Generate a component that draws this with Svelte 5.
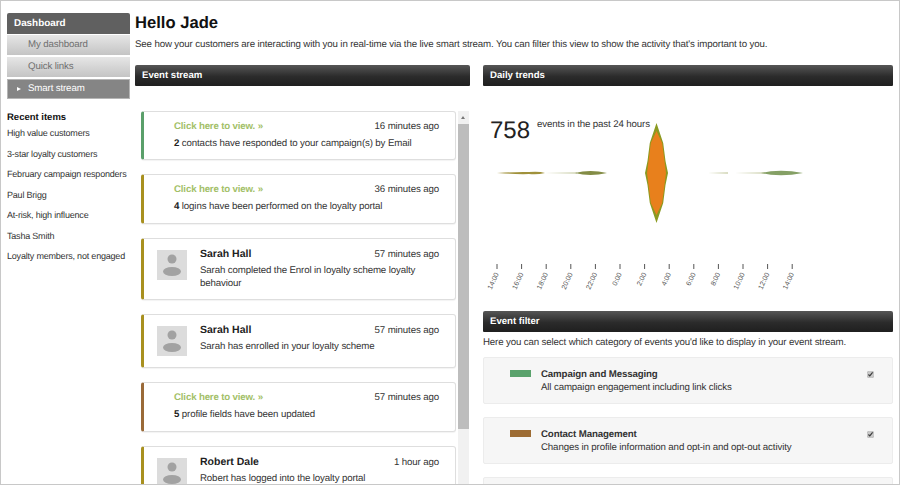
<script>
  const recent = ['High value customers','3-star loyalty customers','February campaign responders','Paul Brigg','At-risk, high influence','Tasha Smith','Loyalty members, not engaged'];
  const events = [
    { c:'#5a9f6a', h:49, time:'16 minutes ago', n:'2', text:' contacts have responded to your campaign(s) by Email' },
    { c:'#a8901f', h:50, time:'36 minutes ago', n:'4', text:' logins have been performed on the loyalty portal' },
    { c:'#a8901f', h:62, time:'57 minutes ago', name:'Sarah Hall', text:'Sarah completed the Enrol in loyalty scheme loyalty behaviour' },
    { c:'#a8901f', h:54, time:'57 minutes ago', name:'Sarah Hall', text:'Sarah has enrolled in your loyalty scheme' },
    { c:'#9a6a38', h:50, time:'57 minutes ago', n:'5', text:' profile fields have been updated' },
    { c:'#a8901f', h:63, time:'1 hour ago', name:'Robert Dale', text:'Robert has logged into the loyalty portal' }
  ];
  const hours = ['14:00','16:00','18:00','20:00','22:00','0:00','2:00','4:00','6:00','8:00','10:00','12:00','14:00'];
  const filters = [
    { c:'#5aa26c', t:'Campaign and Messaging', d:'All campaign engagement including link clicks' },
    { c:'#9d6c34', t:'Contact Management', d:'Changes in profile information and opt-in and opt-out activity' },
    { c:'#a8901f', t:'', d:'' }
  ];
</script>

<div class="page">
  <aside class="side">
    <nav class="menu">
      <div class="menu-head">Dashboard</div>
      <div class="menu-item">My dashboard</div>
      <div class="menu-item">Quick links</div>
      <div class="menu-item active"><span class="arrow"></span>Smart stream</div>
    </nav>
    <h3>Recent items</h3>
    <ul>
      {#each recent as r}<li>{r}</li>{/each}
    </ul>
  </aside>

  <main class="main">
    <h1>Hello Jade</h1>
    <p class="intro">See how your customers are interacting with you in real-time via the live smart stream. You can filter this view to show the activity that's important to you.</p>
    <div class="cols">
      <section class="left">
        <div class="bar">Event stream</div>
        <div class="stream">
          <div class="cards">
            {#each events as e}
              <article class="card" style="border-left-color:{e.c};min-height:{e.h}px">
                {#if e.name}
                  <div class="avatar">
                    <svg width="30" height="30" viewBox="0 0 30 30"><rect width="30" height="30" fill="#dcdcdc"/><circle cx="15" cy="9" r="4.500" fill="#a2a2a2"/><ellipse cx="15" cy="21.500" rx="9" ry="4.500" fill="#a2a2a2"/></svg>
                  </div>
                  <div class="body">
                    <div class="top"><b class="name">{e.name}</b><span class="time">{e.time}</span></div>
                    <div class="msg person">{e.text}</div>
                  </div>
                {:else}
                  <div class="body plain">
                    <div class="top"><span class="link">Click here to view. »</span><span class="time">{e.time}</span></div>
                    <div class="msg"><b>{e.n}</b>{e.text}</div>
                  </div>
                {/if}
              </article>
            {/each}
          </div>
          <div class="scroll"><div class="up"></div><div class="thumb"></div></div>
        </div>
      </section>

      <section class="right">
        <div class="bar">Daily trends</div>
        <div class="chart">
          <div class="stat"><span class="num">758</span><span class="lbl">events in the past 24 hours</span></div>
          <svg width="410" height="200" viewBox="0 0 410 200">
            <defs>
              <filter id="soft" x="-10%" y="-300%" width="120%" height="700%"><feGaussianBlur stdDeviation="0.4"/></filter>
              <filter id="spike" x="-20%" y="-10%" width="140%" height="120%"><feGaussianBlur stdDeviation="0.3"/></filter>
            </defs>
            <g filter="url(#soft)">
              <path d="M14 73 Q36 71.500 46 72 Q56 71 62 73 Q54 75 46 74 Q36 74.500 14 73Z" fill="#a0913a"/>
              <path d="M62 73 L94 72.600 L94 73.400Z" fill="#b5bb88"/>
              <path d="M92 73 Q107 69 124 73 Q107 77 92 73Z" fill="#838c45"/>
              <path d="M225 73 L245 72.500 L245 73.500Z" fill="#b5bb88"/>
              <path d="M252 73 L282 72.500 L282 73.500Z" fill="#b5bb88"/>
              <path d="M278 73 Q297 68.500 320 73 Q297 77.500 278 73Z" fill="#85a065"/>
            </g>
            <g filter="url(#spike)">
              <path d="M173.500 23 L166.800 43 L164.500 61 L162 73 L164.500 85 L166.800 103 L173.500 123 L180.200 103 L182.500 85 L185 73 L182.500 61 L180.200 43Z" fill="#8a9a20"/>
              <path d="M173.500 31 L167.800 43 L165.500 61 L164 73 L165.500 85 L167.800 103 L173.500 115 L179.200 103 L181.500 85 L183 73 L181.500 61 L179.200 43Z" fill="#e8801e"/>
            </g>
            {#each hours as h, i}
              {@const x = 14 + i * 24.6}
              <line x1={x} x2={x} y1="164" y2="169" stroke="#555"/>
              <text x={x + 2} y="174" transform="rotate(-65 {x + 2} 174)" text-anchor="end" class="tick">{h}</text>
            {/each}
          </svg>
        </div>
        <div class="bar">Event filter</div>
        <p class="hint">Here you can select which category of events you'd like to display in your event stream.</p>
        <div class="filters">
          {#each filters as f}
            <div class="filter">
              <span class="swatch" style="background:{f.t ? f.c : 'transparent'}"></span>
              <div class="ftext"><b>{f.t}</b><span>{f.d}</span></div>
              {#if f.t}<input type="checkbox" checked />{/if}
            </div>
          {/each}
        </div>
      </section>
    </div>
  </main>
</div>

<style>
  :global(body) { margin: 0; background: #fff; }
  .page {
    width: 900px; height: 485px; box-sizing: border-box; overflow: hidden;
    border: 1px solid #c8c8c8;
    display: flex; gap: 5px; padding: 12px 6px 0 6px;
    font: 9.700px/12px "Liberation Sans", Arial, sans-serif; letter-spacing: -0.13px; color: #333;
    text-rendering: geometricPrecision;
  }
  .side { width: 123px; flex: none; }
  .menu { display: flex; flex-direction: column; border-radius: 2px 2px 0 0; overflow: hidden; }
  .menu-head { height: 21px; background: #606060; color: #fff; font-weight: bold; font-size: 9.900px; letter-spacing: 0; line-height: 22px; padding-left: 7px; }
  .menu-item { height: 20px; margin-top: 1px; line-height: 19px; padding-left: 21px; color: #707070;
    background: linear-gradient(#e6e6e6, #c4c4c4); }
  .menu-item + .menu-item { margin-top: 2px; }
  .menu-item.active { background: #858585; color: #fff; position: relative; outline: 1px solid #b5b5b5; outline-offset: -1px; }
  .arrow { position: absolute; left: 10px; top: 8px; border-left: 4px solid #fff; border-top: 2.500px solid transparent; border-bottom: 2.500px solid transparent; }
  h3 { margin: 13px 0 0; font-size: 9.500px; letter-spacing: 0; line-height: 12px; color: #111; }
  ul { list-style: none; margin: 2px 0 0; padding: 0; }
  li { height: 20.500px; line-height: 15px; font-size: 9px; letter-spacing: -0.2px; color: #333; white-space: nowrap; }
  .main { flex: 1; min-width: 0; }
  h1 { margin: 0; font-size: 16.600px; letter-spacing: 0; line-height: 20px; color: #111; }
  .intro { margin: 6px 0 0; line-height: 12px; white-space: nowrap; color: #333; }
  .cols { display: flex; gap: 13px; margin-top: 14px; }
  .left { width: 335px; flex: none; }
  .right { width: 410px; flex: none; }
  .bar { height: 21px; box-sizing: border-box; line-height: 22px; padding-left: 7px; border-radius: 2px 2px 1px 1px; color: #fff; font-weight: bold; font-size: 9.600px; letter-spacing: 0;
    background: linear-gradient(#565656, #2b2b2b 55%, #1f1f1f); }
  .stream { display: flex; gap: 2px; margin-top: 25px; padding-left: 6px; }
  .cards { width: 315px; display: flex; flex-direction: column; gap: 14px; }
  .card { box-sizing: border-box; display: flex; border: 1px solid #dedede; border-left: 3px solid; border-radius: 3px; background: #fff; box-shadow: 0 1px 1px rgba(0,0,0,.05); padding: 9px 16px 0 13px; }
  .avatar { flex: none; width: 30px; height: 30px; margin: 2px 13px 0 0; }
  .avatar svg { display: block; }
  .body { flex: 1; min-width: 0; }
  .body.plain { padding-left: 17px; }
  .top { display: flex; justify-content: space-between; align-items: baseline; }
  .name { font-size: 10.500px; letter-spacing: 0; color: #222; }
  .link { color: #a3bf68; font-weight: bold; letter-spacing: -0.16px; }
  .msg { margin-top: 4px; line-height: 13px; color: #333; }
  .msg.person { margin-top: 3px; }
  .msg b { color: #222; }
  .scroll { width: 11px; height: 380px; background: #f1f1f1; }
  .up { height: 13px; position: relative; }
  .up::after { content: ''; position: absolute; left: 3px; top: 5px; border-bottom: 3px solid #777; border-left: 2.500px solid transparent; border-right: 2.500px solid transparent; }
  .thumb { height: 305px; background: #bdbdbd; }
  .chart { position: relative; height: 200px; margin-top: 14px; margin-bottom: 11px; }
  .chart svg { display: block; }
  .stat { position: absolute; left: 7px; top: 17px; display: flex; gap: 7px; }
  .num { font-size: 24px; letter-spacing: 0; line-height: 28px; color: #222; }
  .lbl { line-height: 12px; margin-top: 2px; color: #333; }
  .tick { font: 7px "Liberation Sans", Arial, sans-serif; letter-spacing: 0; fill: #555; }
  .hint { margin: 4px 0 0; line-height: 14px; }
  .filters { display: flex; flex-direction: column; gap: 13px; margin-top: 7px; }
  .filter { height: 47px; flex: none; box-sizing: border-box; display: flex; background: #f6f6f6; border: 1px solid #ececec; border-radius: 2px; padding: 11px 17px 0 26px; }
  .swatch { flex: none; width: 21px; height: 7px; margin: 1px 10px 0 0; }
  .ftext { flex: 1; display: flex; flex-direction: column; gap: 1px; }
  .ftext b { color: #333; }
  input { margin: 2px 1px 0 0; width: 7px; height: 7px; accent-color: #c8c8c8; }
</style>
